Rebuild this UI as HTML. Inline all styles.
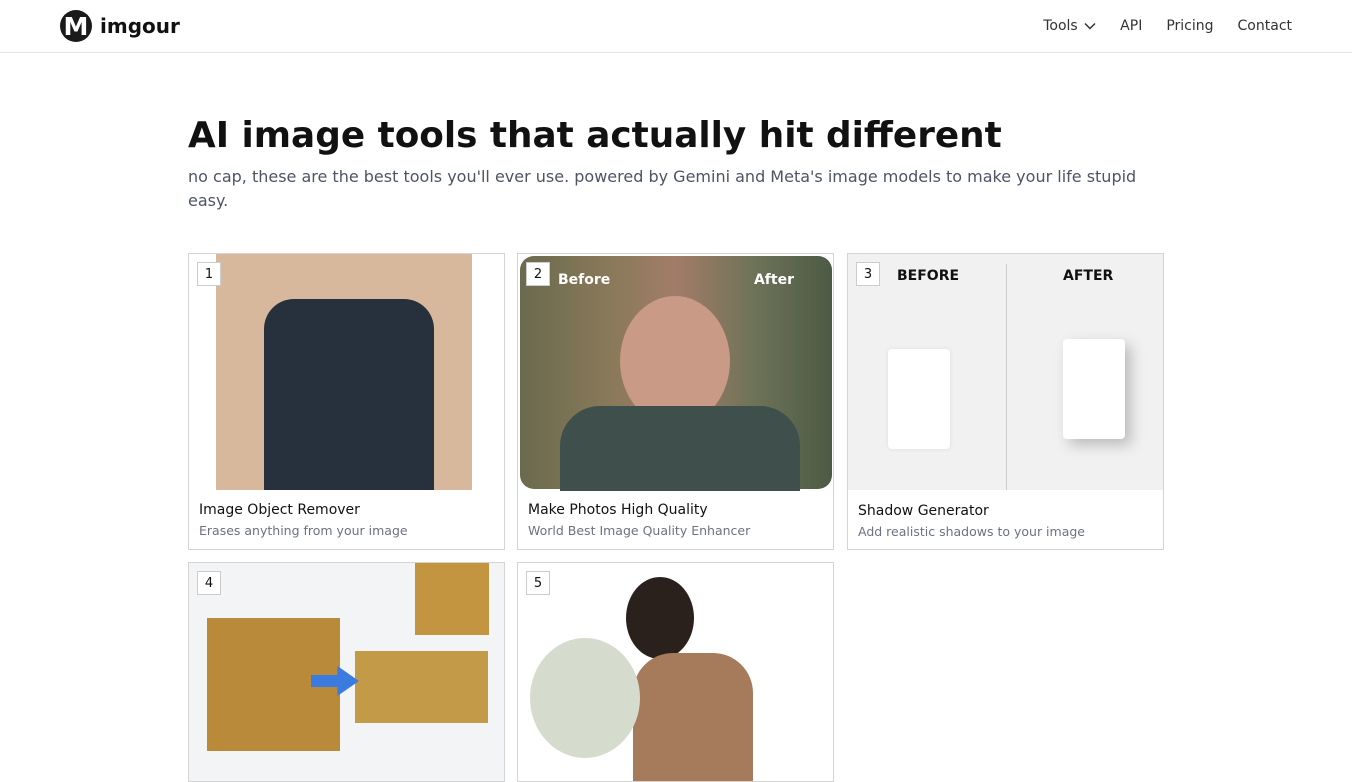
<!DOCTYPE html>
<html><head><style>
*{box-sizing:border-box;margin:0;padding:0}
body{width:1352px;height:760px;overflow:hidden;background:#fff;font-family:"DejaVu Sans","Liberation Sans",sans-serif;color:#111}
.hdr{height:53px;border-bottom:1px solid #e5e5e5;position:relative}
.logo{position:absolute;left:60px;top:10px;display:flex;align-items:center}
.logo .c{width:32px;height:32px;border-radius:50%;background:#1a1a1a;color:#fff;font-weight:bold;font-size:25px;display:flex;align-items:center;justify-content:center}
.logo span{font-weight:bold;font-size:20px;margin-left:8px}
nav{position:absolute;right:60px;top:18px;font-size:14px;color:#333;display:flex;gap:24px;align-items:center}
h1{position:absolute;left:188px;top:115px;font-size:35.8px;font-weight:bold;letter-spacing:0}
.sub{position:absolute;left:188px;top:165px;width:980px;font-size:16px;line-height:24px;color:#4b5563}
.card{position:absolute;width:317px;border:1px solid #d4d4d4;background:#fff;overflow:hidden}
.img{position:absolute;left:0;top:0;width:100%;height:236px}
.num{position:absolute;left:8px;top:8px;width:24px;height:24px;background:#fff;border:1px solid #ccc;font-size:13px;display:flex;align-items:center;justify-content:center}
.t{position:absolute;left:10px;top:248px;font-size:14px;color:#111}
.d{position:absolute;left:10px;top:269px;font-size:12.5px;color:#6b7280}
</style></head><body>
<div class="hdr">
<div class="logo"><div class="c">M</div><span>imgour</span></div>
<nav><span>Tools <svg width="12" height="8" viewBox="0 0 12 8" style="margin-left:2px"><path d="M1 1.5l5 5 5-5" fill="none" stroke="#333" stroke-width="1.5"/></svg></span><span>API</span><span>Pricing</span><span>Contact</span></nav>
</div>
<h1>AI image tools that actually hit different</h1>
<div class="sub">no cap, these are the best tools you'll ever use. powered by Gemini and Meta's image models to make your life stupid easy.</div>

<div class="card" style="left:188px;top:253px;height:297px">
<div class="img" style="background:#fff"><div style="position:absolute;left:27px;top:0;width:256px;height:236px;background:#d7b89c"></div>
<div style="position:absolute;left:75px;top:45px;width:170px;height:191px;background:#27303d;border-radius:30px 30px 0 0"></div></div>
<div class="num">1</div><div class="t">Image Object Remover</div><div class="d">Erases anything from your image</div></div>

<div class="card" style="left:517px;top:253px;height:297px">
<div class="img" style="left:2px;top:2px;width:312px;height:233px;border-radius:14px;background:linear-gradient(90deg,#6b6a4e,#8a7a5a 30%,#a27c68 50%,#6e7358 75%,#4c5a45)">
<div style="position:absolute;left:100px;top:40px;width:110px;height:130px;border-radius:50%;background:#c99a85"></div>
<div style="position:absolute;left:40px;top:150px;width:240px;height:85px;background:#3e4f4c;border-radius:40px 40px 0 0"></div>
<div style="position:absolute;left:38px;top:16px;color:#fff;font-weight:bold;font-size:14px">Before</div>
<div style="position:absolute;right:38px;top:16px;color:#fff;font-weight:bold;font-size:14px">After</div></div>
<div class="num">2</div><div class="t">Make Photos High Quality</div><div class="d">World Best Image Quality Enhancer</div></div>

<div class="card" style="left:847px;top:253px;height:297px">
<div class="img" style="background:#f1f1f1">
<div style="position:absolute;left:158px;top:10px;width:1px;height:226px;background:#ccc"></div>
<div style="position:absolute;left:49px;top:14px;font-weight:bold;font-size:14px">BEFORE</div>
<div style="position:absolute;left:215px;top:14px;font-weight:bold;font-size:14px">AFTER</div>
<div style="position:absolute;left:40px;top:95px;width:62px;height:100px;background:#fff;border-radius:4px;box-shadow:0 0 4px #ddd"></div>
<div style="position:absolute;left:215px;top:85px;width:62px;height:100px;background:#fff;border-radius:4px;box-shadow:6px 6px 14px #bbb"></div></div>
<div class="num">3</div><div class="t" style="top:249px">Shadow Generator</div><div class="d" style="top:270px">Add realistic shadows to your image</div></div>

<div class="card" style="left:188px;top:562px;height:220px">
<div class="img" style="background:#f3f4f6">
<div style="position:absolute;left:18px;top:55px;width:133px;height:133px;background:#b88a3a"></div>
<div style="position:absolute;left:226px;top:0;width:74px;height:72px;background:#c39540"></div>
<div style="position:absolute;left:166px;top:88px;width:133px;height:72px;background:#c39a48"></div>
<div style="position:absolute;left:122px;top:103px;width:48px;height:30px;background:#3b7be0;clip-path:polygon(0 30%,55% 30%,55% 0,100% 50%,55% 100%,55% 70%,0 70%)"></div></div>
<div class="num">4</div></div>

<div class="card" style="left:517px;top:562px;height:220px">
<div class="img" style="background:#fff">
<div style="position:absolute;left:108px;top:14px;width:68px;height:82px;border-radius:50%;background:#2b211c"></div>
<div style="position:absolute;left:115px;top:90px;width:120px;height:140px;background:#a67b5b;border-radius:40px 40px 0 0"></div>
<div style="position:absolute;left:12px;top:75px;width:110px;height:120px;border-radius:50%;background:#d6dccd"></div></div>
<div class="num">5</div></div>
</body></html>
